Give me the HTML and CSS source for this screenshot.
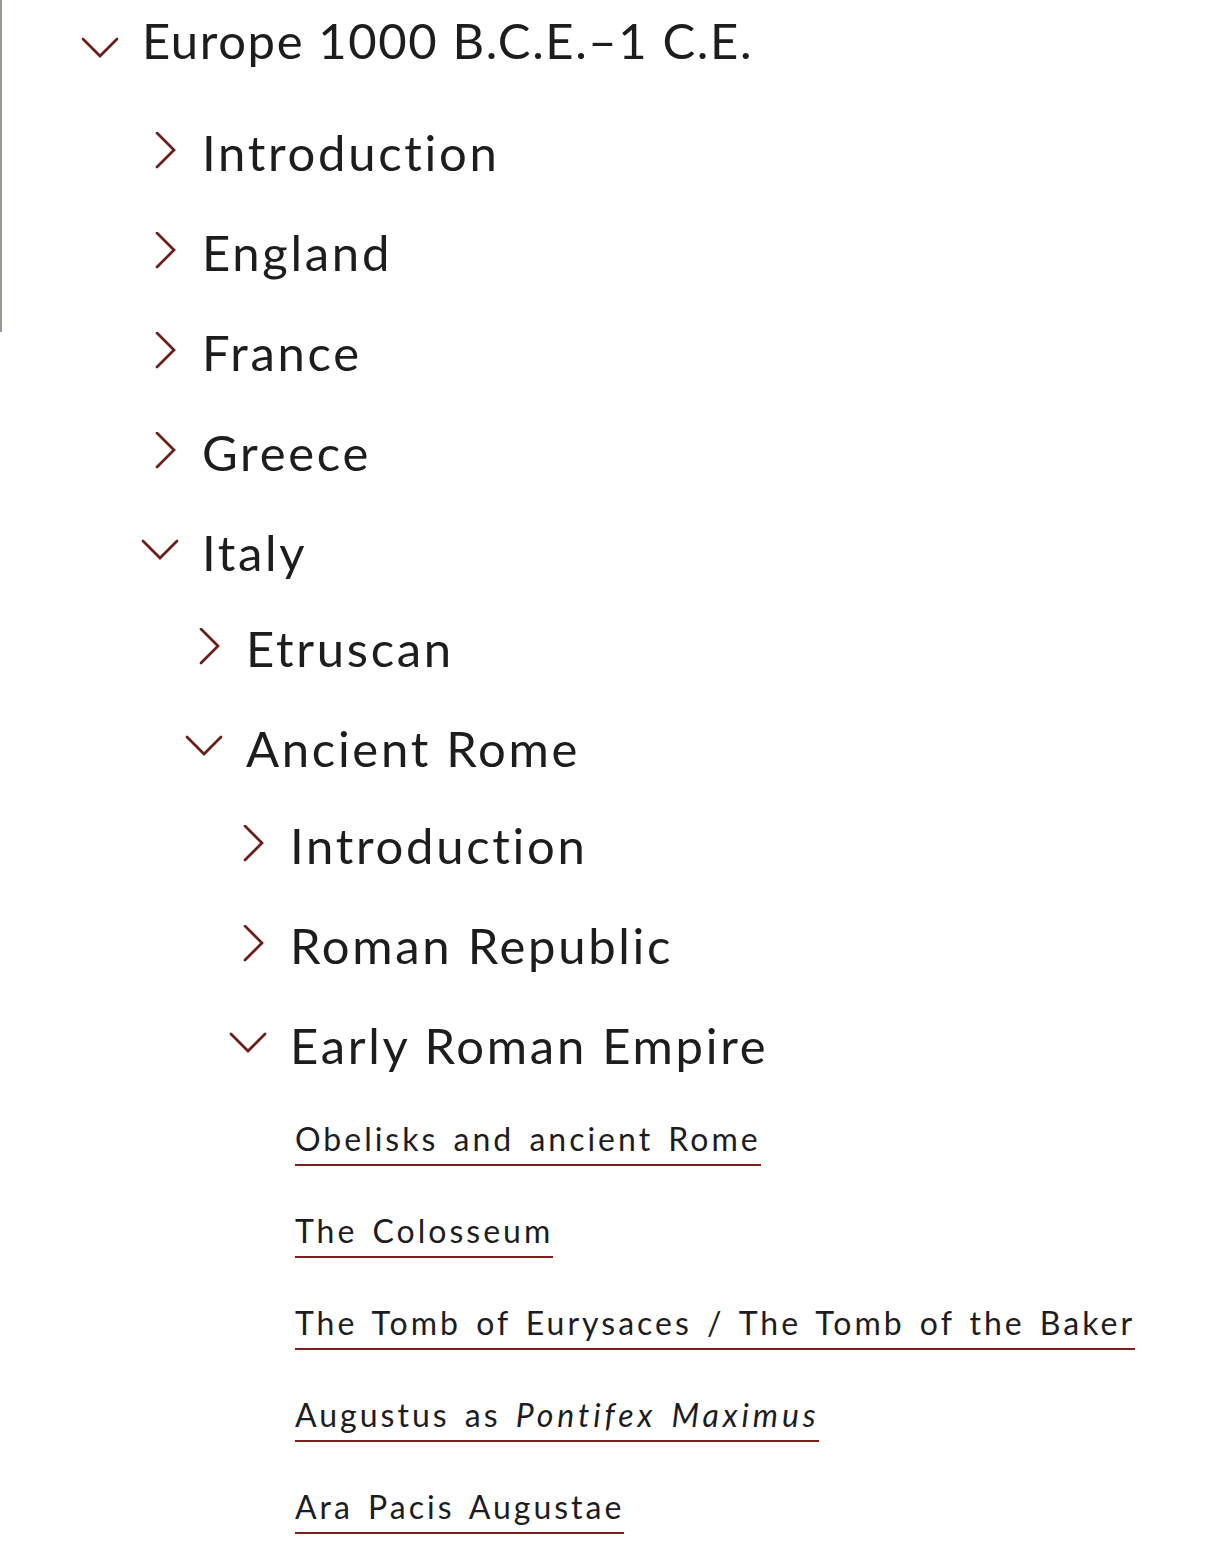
FILE: index.html
```html
<!DOCTYPE html>
<html lang="en">
<head>
<meta charset="utf-8">
<title>Europe 1000 B.C.E.–1 C.E.</title>
<link rel="stylesheet" href="styles.css">
</head>
<body>
<div class="drawer-edge"></div>
<nav class="tree">
  <ul class="level level-1">
    <li>
      <div class="row open first"><svg class="chev" viewBox="0 0 40 40"><path d="M4 19 L21 36 L38 19"/></svg><span class="label">Europe 1000 B.C.E.–1 C.E.</span></div>
      <ul class="level level-2">
        <li><div class="row"><svg class="chev" viewBox="0 0 40 40"><path d="M18 1 L35 18 L18 35"/></svg><span class="label">Introduction</span></div></li>
        <li><div class="row"><svg class="chev" viewBox="0 0 40 40"><path d="M18 1 L35 18 L18 35"/></svg><span class="label">England</span></div></li>
        <li><div class="row"><svg class="chev" viewBox="0 0 40 40"><path d="M18 1 L35 18 L18 35"/></svg><span class="label">France</span></div></li>
        <li><div class="row"><svg class="chev" viewBox="0 0 40 40"><path d="M18 1 L35 18 L18 35"/></svg><span class="label">Greece</span></div></li>
        <li>
          <div class="row open"><svg class="chev" viewBox="0 0 40 40"><path d="M4 9 L21 26 L38 9"/></svg><span class="label">Italy</span></div>
          <ul class="level level-3">
            <li><div class="row"><svg class="chev" viewBox="0 0 40 40"><path d="M18 1 L35 18 L18 35"/></svg><span class="label">Etruscan</span></div></li>
            <li>
              <div class="row open"><svg class="chev" viewBox="0 0 40 40"><path d="M4 9 L21 26 L38 9"/></svg><span class="label">Ancient Rome</span></div>
              <ul class="level level-4">
                <li><div class="row"><svg class="chev" viewBox="0 0 40 40"><path d="M18 1 L35 18 L18 35"/></svg><span class="label">Introduction</span></div></li>
                <li><div class="row"><svg class="chev" viewBox="0 0 40 40"><path d="M18 1 L35 18 L18 35"/></svg><span class="label">Roman Republic</span></div></li>
                <li>
                  <div class="row open"><svg class="chev" viewBox="0 0 40 40"><path d="M4 9 L21 26 L38 9"/></svg><span class="label">Early Roman Empire</span></div>
                  <ul class="links">
                    <li><a href="#">Obelisks and ancient Rome</a></li>
                    <li><a href="#">The Colosseum</a></li>
                    <li><a href="#">The Tomb of Eurysaces / The Tomb of the Baker</a></li>
                    <li><a href="#">Augustus as <em>Pontifex Maximus</em></a></li>
                    <li><a href="#">Ara Pacis Augustae</a></li>
                  </ul>
                </li>
              </ul>
            </li>
          </ul>
        </li>
      </ul>
    </li>
  </ul>
</nav>
</body>
</html>
```
FILE: styles.css
```css
html, body {
  margin: 0;
  padding: 0;
  background: #ffffff;
}
body {
  font-family: "Lato", "Open Sans", sans-serif;
  font-variant-ligatures: none;
  color: #1d1d1f;
  width: 1224px;
  height: 1546px;
  overflow: hidden;
  position: relative;
}
.drawer-edge {
  position: absolute;
  left: 0;
  top: 0;
  width: 2px;
  height: 332px;
  background: #9a988f;
  box-shadow: 8px 0 36px rgba(0, 0, 0, 0.16);
}
.tree ul {
  list-style: none;
  margin: 0;
  padding: 0;
}
.tree .level-1 { padding-left: 143px; }
.tree .level-2 { padding-left: 60px; }
.tree .level-3 { padding-left: 44px; margin-top: -4px; }
.tree .level-4 { padding-left: 44px; margin-top: -3px; }
.row {
  display: flex;
  align-items: center;
  height: 100px;
  margin-left: -64px;
}
.row.first {
  height: 80px;
  margin-bottom: 22px;
}
.chev {
  width: 40px;
  height: 40px;
  flex: none;
  margin-right: 23px;
  fill: none;
  stroke: #6e1d16;
  stroke-width: 2.7;
  stroke-linecap: round;
  stroke-linejoin: miter;
}
.label {
  font-size: 49px;
  line-height: 1;
  letter-spacing: 2.7px;
  white-space: nowrap;
}
.first .label {
  letter-spacing: 1.6px;
}
.tree .links {
  padding-left: 4px;
  padding-top: 25px;
}
.links li {
  height: 92px;
}
.links a {
  display: inline-block;
  color: #1d1d1f;
  text-decoration: none;
  font-size: 32px;
  line-height: 38px;
  letter-spacing: 3px;
  word-spacing: 4px;
  border-bottom: 2px solid #7a1f1a;
  padding-bottom: 6px;
}
.links em {
  font-style: italic;
  letter-spacing: 3.9px;
}
```
